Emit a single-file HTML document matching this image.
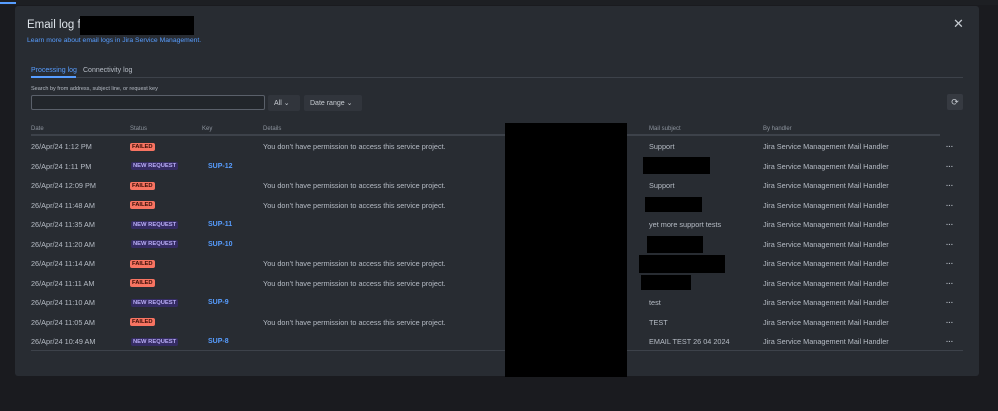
<!DOCTYPE html>
<html><head><style>
*{margin:0;padding:0;box-sizing:border-box}
body{width:998px;height:411px;background:#1a1b1f;font-family:"Liberation Sans",sans-serif;position:relative;overflow:hidden;color:#b6bcc5}
.topbar{position:absolute;left:0;top:0;width:998px;height:5px;background:#1d1f23}
.topbar i{position:absolute;left:0;top:2px;width:16px;height:2px;background:#579dff}
.modal{position:absolute;left:15px;top:6px;width:964px;height:370px;background:#282c32;border-radius:3px}
.a{position:absolute;white-space:nowrap}
.blk{position:absolute;background:#000}
.t{font-size:7.3px;color:#b6bcc5}
.h{font-size:6px;color:#8c939d}
.lz{font-size:5.8px;font-weight:bold;padding:0 2px;border-radius:2px;line-height:8px;height:8px}
.f{background:#f87462;color:#3b0d06}
.n{background:#352c63;color:#b8acf6}
.k{color:#579dff;font-size:7px;font-weight:bold}
.line{position:absolute;height:1px;background:#3d424a}
</style></head><body>
<div class="topbar"><i></i></div>
<div class="modal"></div>
<div class="a" style="left:27px;top:19px;font-size:11.5px;color:#dee4ea">Email log for</div>
<div class="blk" style="left:80px;top:16px;width:114px;height:19px"></div>
<div class="a" style="left:27px;top:37px;font-size:6.8px;color:#579dff">Learn more about email logs in Jira Service Management.</div>
<div class="a" style="left:953px;top:16px;font-size:13px;color:#c7ccd2">✕</div>
<div class="a" style="left:31px;top:67px;font-size:7px;color:#579dff">Processing log</div>
<div class="a" style="left:31px;top:76px;width:45px;height:2px;background:#579dff"></div>
<div class="a" style="left:83px;top:67px;font-size:7px;color:#b6bcc5">Connectivity log</div>
<div class="line" style="left:76px;top:77px;width:887px"></div>
<div class="a" style="left:31px;top:86px;font-size:5.5px;color:#b6bcc5">Search by from address, subject line, or request key</div>
<div class="a" style="left:31px;top:95px;width:234px;height:15px;border:1px solid #5a606a;border-radius:2px;background:#22262b"></div>
<div class="a" style="left:268px;top:95px;width:32px;height:16px;background:#31353c;border-radius:2px;font-size:7px;color:#c7ccd2;padding:4px 6px">All ⌄</div>
<div class="a" style="left:304px;top:95px;width:58px;height:16px;background:#31353c;border-radius:2px;font-size:7px;color:#c7ccd2;padding:4px 6px">Date range ⌄</div>
<div class="a" style="left:947px;top:94px;width:16px;height:16px;background:#363a41;border-radius:2px;font-size:9px;color:#c7ccd2;text-align:center;line-height:16px">⟳</div>
<div class="a h" style="left:31px;top:126px">Date</div>
<div class="a h" style="left:130px;top:126px">Status</div>
<div class="a h" style="left:202px;top:126px">Key</div>
<div class="a h" style="left:263px;top:126px">Details</div>
<div class="a h" style="left:649px;top:126px">Mail subject</div>
<div class="a h" style="left:763px;top:126px">By handler</div>
<div class="line" style="left:31px;top:134px;width:909px;height:2px"></div>
<div class="line" style="left:31px;top:350px;width:932px"></div>

<div id="rows"></div>
<script>
const R=[["1:12 PM","f","","d","Support"],["1:11 PM","n","SUP-12","",""],["12:09 PM","f","","d","Support"],["11:48 AM","f","","d",""],["11:35 AM","n","SUP-11","","yet more support tests"],["11:20 AM","n","SUP-10","",""],["11:14 AM","f","","d",""],["11:11 AM","f","","d",""],["11:10 AM","n","SUP-9","","test"],["11:05 AM","f","","d","TEST"],["10:49 AM","n","SUP-8","","EMAIL TEST 26 04 2024"]];
let h="";R.forEach((r,i)=>{const y=143+i*19.5;
h+=`<div class="a t" style="left:31px;top:${y-1}px">26/Apr/24 ${r[0]}</div>`;
h+=`<div class="a lz ${r[1]}" style="left:${r[1]=="f"?130:131}px;top:${y-0.5}px">${r[1]=="f"?"FAILED":"NEW REQUEST"}</div>`;
if(r[2])h+=`<div class="a k" style="left:208px;top:${y}px">${r[2]}</div>`;
if(r[3])h+=`<div class="a t" style="left:263px;top:${y-1}px">You don’t have permission to access this service project.</div>`;
if(r[4])h+=`<div class="a t" style="left:649px;top:${y-1}px">${r[4]}</div>`;
h+=`<div class="a t" style="left:763px;top:${y-1}px">Jira Service Management Mail Handler</div>`;
h+=`<div class="a t" style="left:946px;top:${y-1}px;font-weight:bold">···</div>`;});
document.getElementById("rows").innerHTML=h;
</script>
<div class="blk" style="left:505px;top:123px;width:122px;height:254px"></div>
<div class="blk" style="left:643px;top:157px;width:67px;height:17px"></div>
<div class="blk" style="left:645px;top:197px;width:57px;height:15px"></div>
<div class="blk" style="left:647px;top:236px;width:56px;height:17px"></div>
<div class="blk" style="left:639px;top:255px;width:86px;height:18px"></div>
<div class="blk" style="left:641px;top:275px;width:50px;height:15px"></div>
</body></html>
